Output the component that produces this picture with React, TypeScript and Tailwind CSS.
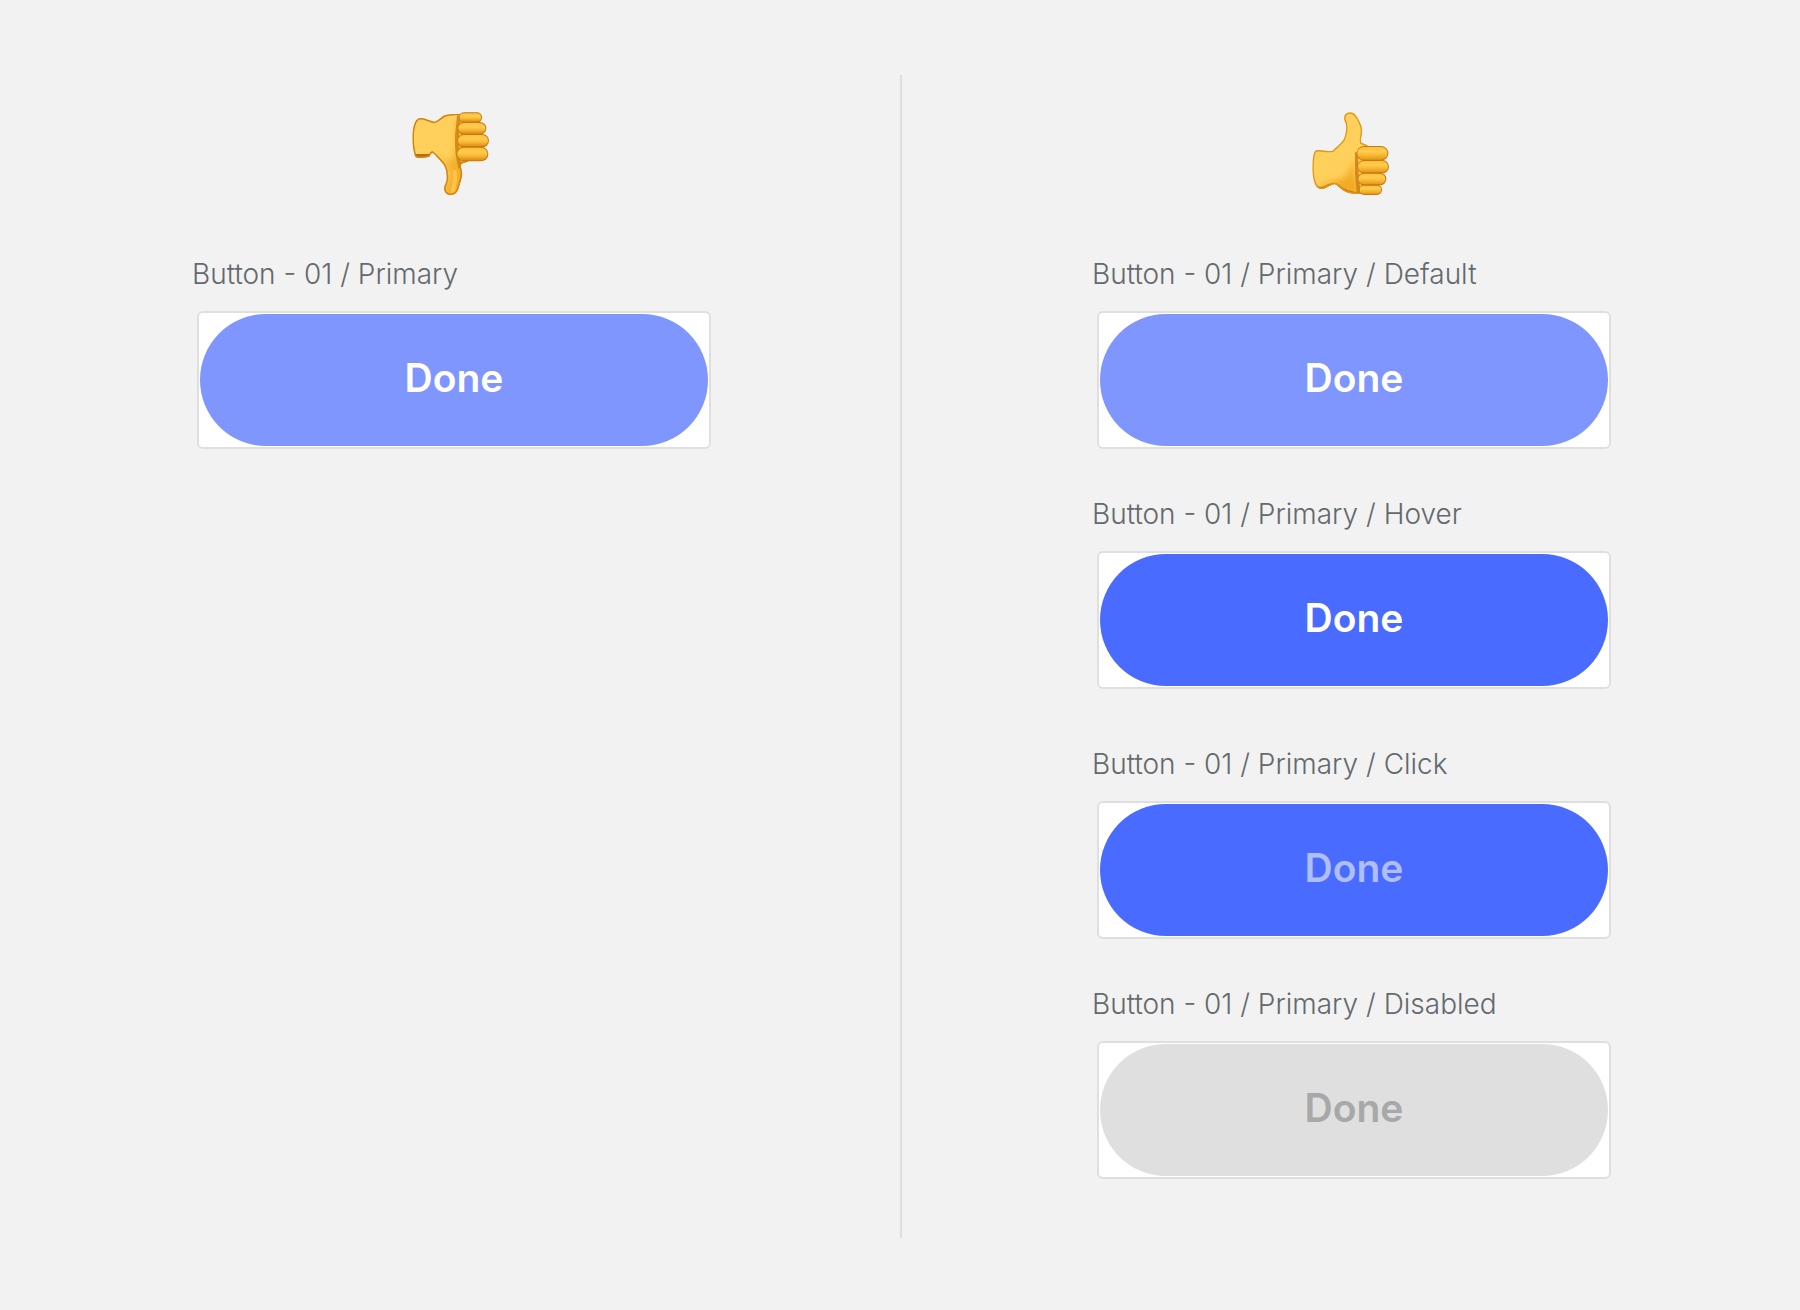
type Variant = 'default' | 'hover' | 'click' | 'disabled'

type Item = {
  name: string
  variant: Variant
}

const before: Item[] = [{ name: 'Button - 01 / Primary', variant: 'default' }]

// grouped in pairs, the second pair sits a little further down
const after: Item[][] = [
  [
    { name: 'Button - 01 / Primary / Default', variant: 'default' },
    { name: 'Button - 01 / Primary / Hover', variant: 'hover' },
  ],
  [
    { name: 'Button - 01 / Primary / Click', variant: 'click' },
    { name: 'Button - 01 / Primary / Disabled', variant: 'disabled' },
  ],
]

const variants: Record<Variant, string> = {
  default: 'bg-[#7f96ff] text-white',
  hover: 'bg-[#496bff] text-white',
  click: 'bg-[#496bff] text-[#afbeff]',
  disabled: 'bg-[#dfdfdf] text-[#a6a8a9]',
}

const palmUp =
  'M58 172 C61 164 68 164 80 166 C92 168 102 169 113 167 C122 158 136 148 145 135 C153 120 155 102 152 84 C145 72 146 59 156 54 C167 49 180 54 187 68 C197 84 203 98 201 114 C199 128 196 134 199 143 L216 150 L226 162 L222 290 L196 297 C180 297 162 296 149 289 C140 284 130 272 119 267 C108 269 98 277 86 281 C76 284 66 280 60 266 C50 246 50 192 58 172 Z'

// drawn upright too, the svg group flips it
const palmDown =
  'M60 170 C62 163 70 164 82 164 L100 166 C106 168 106 176 112 179 C120 174 132 160 144 146 C154 132 156 116 155 98 C154 88 146 80 147 70 C149 58 157 52 167 52 C180 52 188 60 192 76 C196 92 203 106 201 122 C199 134 196 136 199 146 L218 152 L226 164 L222 290 L194 296 C178 295 162 296 149 291 C138 286 130 275 118 272 C106 274 92 282 79 283 C69 284 61 276 57 262 C50 240 50 196 60 170 Z'

const fingers = [
  { x: 192, y: 269, w: 69, h: 31, r: 15 },
  { x: 188, y: 233, w: 86, h: 38, r: 19 },
  { x: 187, y: 195, w: 95, h: 40, r: 20 },
  { x: 185, y: 153, w: 95, h: 44, r: 22 },
]

function Thumb({ down = false }: { down?: boolean }) {
  const id = down ? 'down' : 'up'
  const palm = down ? palmDown : palmUp
  const light = down ? 1 : 0
  return (
    <svg
      viewBox="0 0 330 330"
      className="mx-auto size-[110px]"
      role="img"
      aria-label={down ? 'Thumbs down' : 'Thumbs up'}
    >
      <defs>
        <clipPath id={`${id}-palm`}>
          <path d={palm} />
        </clipPath>
        <linearGradient id={`${id}-finger`} x1="0" x2="0" y1={light} y2={1 - light}>
          <stop offset="0" stopColor="#f9c040" />
          <stop offset="0.35" stopColor="#ffcc4e" />
          <stop offset="0.65" stopColor="#f8b733" />
          <stop offset="1" stopColor={down ? '#d98d18' : '#e2981c'} />
        </linearGradient>
        <filter id={`${id}-soft`} x="-30%" y="-30%" width="160%" height="160%">
          <feGaussianBlur stdDeviation="9" />
        </filter>
        <filter id={`${id}-edge`} x="-30%" y="-30%" width="160%" height="160%">
          <feGaussianBlur stdDeviation="2" />
        </filter>
      </defs>
      <g transform={down ? 'matrix(1 0 0 -1 0 352)' : undefined}>
        <path d={palm} fill="#ffd15c" />
        <g clipPath={`url(#${id}-palm)`}>
          {down ? (
            <>
              <path d="M112 176 C146 158 160 138 162 122 C166 100 158 86 148 74 L150 45 L215 55 L216 160 L200 280 L186 270 L184 190 L168 150 Z" fill="#f0a724" opacity="0.8" filter={`url(#${id}-soft)`} />
              <path d="M172 60 C178 84 184 100 178 126" fill="none" stroke="#ffc445" strokeWidth="12" filter={`url(#${id}-edge)`} />
              <path d="M196 132 C188 165 184 190 186 230 L192 290" fill="none" stroke="#d0830f" strokeWidth="12" opacity="0.85" filter={`url(#${id}-edge)`} />
              <path d="M50 163 C66 165 88 166 106 170" fill="none" stroke="#b96c0a" strokeWidth="22" filter={`url(#${id}-edge)`} />
              <path d={palm} fill="none" stroke="#d08314" strokeWidth="9" filter={`url(#${id}-edge)`} />
            </>
          ) : (
            <>
              <path d="M185 190 C176 214 176 240 190 262 L200 305 L140 295 C126 274 112 266 90 280 L62 290 C96 246 138 262 156 240 C168 222 172 200 185 190 Z" fill="#f0a41f" opacity="0.85" filter={`url(#${id}-soft)`} />
              <path d="M184 172 L185 230 L191 296" fill="none" stroke="#cc8012" strokeWidth="11" opacity="0.85" filter={`url(#${id}-edge)`} />
              <path d="M57 268 C66 286 80 282 90 278 C106 270 116 264 130 274 C148 292 170 297 200 298" fill="none" stroke="#cc7f10" strokeWidth="11" filter={`url(#${id}-edge)`} />
              <path d={palm} fill="none" stroke="#de9820" strokeWidth="8" filter={`url(#${id}-edge)`} />
            </>
          )}
        </g>
        {fingers.map((f) => (
          <g key={f.y}>
            <rect x={f.x} y={f.y} width={f.w} height={f.h} rx={f.r} fill="#c67a10" />
            <rect x={f.x + 2} y={f.y + 3} width={f.w - 5} height={f.h - 6} rx={f.r - 3} fill={`url(#${id}-finger)`} filter={`url(#${id}-edge)`} />
          </g>
        ))}
      </g>
    </svg>
  )
}

function Sample({ name, variant }: Item) {
  return (
    <figure>
      <figcaption className="mb-[19px] pl-[3px] text-[28px] leading-9 font-light text-[#63696d]">{name}</figcaption>
      <div className="ml-2 rounded-md border-2 border-[#dfdfdf] bg-white p-px">
        <button
          type="button"
          disabled={variant === 'disabled'}
          className={`block h-[132px] w-full rounded-full pb-1 text-[39px] font-semibold ${variants[variant]}`}
        >
          Done
        </button>
      </div>
    </figure>
  )
}

export default function App() {
  return (
    <main className="grid min-h-screen grid-cols-2 bg-[#f2f2f2] pt-[75px] pb-[72px] font-['Inter',sans-serif]">
      <section className="px-8 pt-5">
        <Thumb down />
        <div className="mx-auto mt-[51px] max-w-[522px]">
          {before.map((item) => (
            <Sample key={item.name} {...item} />
          ))}
        </div>
      </section>

      <section className="px-8 pt-5 shadow-[inset_2px_0_0_#dedede]">
        <Thumb />
        <div className="mx-auto mt-[51px] flex max-w-[522px] flex-col gap-[57px]">
          {after.map((group, i) => (
            <div key={i} className="flex flex-col gap-[47px]">
              {group.map((item) => (
                <Sample key={item.name} {...item} />
              ))}
            </div>
          ))}
        </div>
      </section>
    </main>
  )
}
